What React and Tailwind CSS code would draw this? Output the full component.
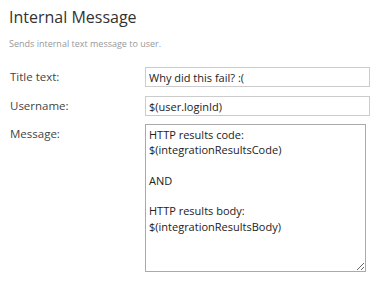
import React from 'react';

export default function App() {
  const message = 'HTTP results code:\n$(integrationResultsCode)\n\nAND\n\nHTTP results body:\n$(integrationResultsBody)';

  return (
    <div className="w-[378px] h-[295px] bg-white font-['Open_Sans',sans-serif] text-[#333]">
      {/* Header */}
      <div className="pl-[9px] pt-[6px]">
        <h1 className="text-[16px] leading-[22px] text-[#333]">Internal Message</h1>
        <p className="mt-[10px] text-[9px] leading-[12px] text-[#999]">Sends internal text message to user.</p>
      </div>

      {/* Form */}
      <div className="mt-[17px] flex flex-col gap-[9px]">
        <div className="flex items-center">
          <label className="w-[145px] pl-[10px] text-[11.5px] text-[#444]">Title text:</label>
          <input
            className="w-[225px] h-[20px] border border-[#ccc] px-[3px] text-[11px] text-[#222] outline-none"
            defaultValue="Why did this fail? :("
          />
        </div>
        <div className="flex items-center">
          <label className="w-[145px] pl-[10px] text-[11.5px] text-[#444]">Username:</label>
          <input
            className="w-[225px] h-[20px] border border-[#ccc] px-[3px] text-[11px] text-[#222] outline-none"
            defaultValue="$(user.loginId)"
          />
        </div>
        <div className="-mt-[1px] flex items-start">
          <label className="w-[145px] pl-[10px] text-[11.5px] text-[#444] pt-[1px]">Message:</label>
          <textarea
            className="w-[221px] h-[148px] border border-[#aaa] px-[3px] py-[2px] text-[11px] leading-[15.3px] text-[#222] outline-none"
            defaultValue={message}
          />
        </div>
      </div>
    </div>
  );
}
